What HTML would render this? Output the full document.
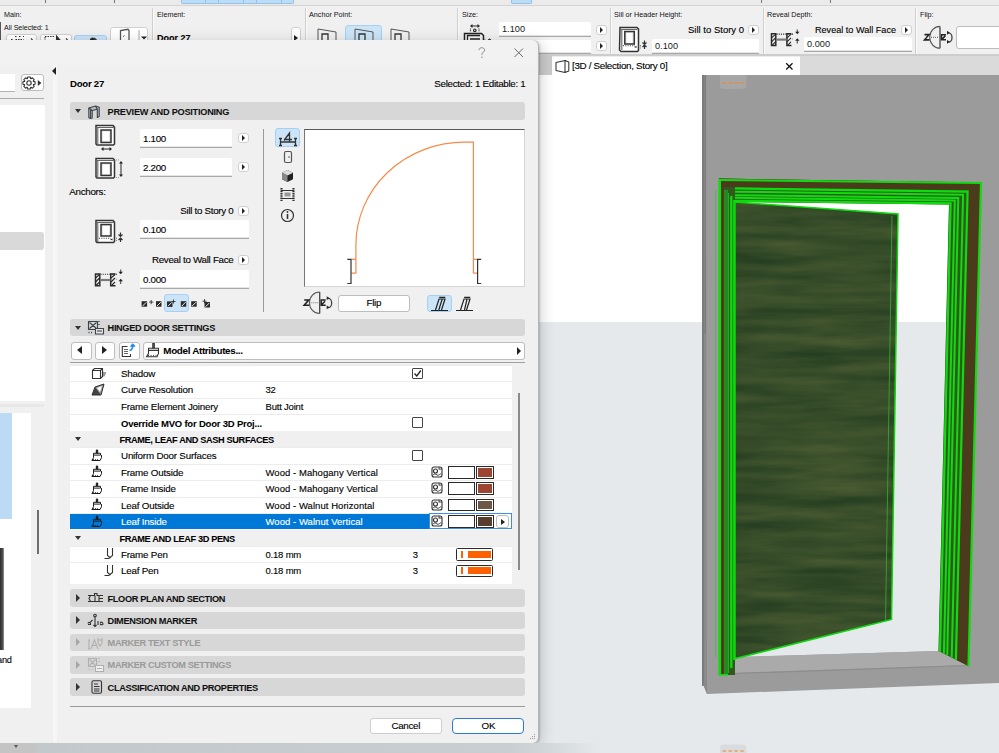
<!DOCTYPE html>
<html><head><meta charset="utf-8">
<style>
*{box-sizing:border-box;margin:0;padding:0}
html,body{width:999px;height:753px;overflow:hidden;background:#f0f0f0;font-family:"Liberation Sans",sans-serif;color:#1a1a1a}
.a{position:absolute}
.t{position:absolute;white-space:nowrap;font-size:9.2px;line-height:12px;color:#000;-webkit-text-stroke:0.12px currentColor}
.t[style*="bold"]{-webkit-text-stroke:0.05px currentColor}
.s{font-size:7.2px;line-height:9px;color:#111;-webkit-text-stroke:0}
.b{font-weight:bold}
.r{text-align:right}
.fld{position:absolute;background:#fff;border-bottom:1.5px solid #a9a9a9;box-shadow:inset 0 -1px 0 #e4e4e4;border-radius:2px 2px 0 0}
.fld span{position:absolute;left:3px;top:50%;margin-top:-6px;font-size:9.2px;line-height:12px;white-space:nowrap}
.abtn{position:absolute;width:11px;height:10px;background:#fff;border:1px solid #d0d0d0;border-radius:3px}
.abtn:after{content:"";position:absolute;left:3px;top:1px;border-left:3.5px solid #222;border-top:3px solid transparent;border-bottom:3px solid transparent}
.vsep{position:absolute;width:2px;background:#cfcfcf;border-right:1px solid #fafafa}
.hdr{position:absolute;left:69.5px;width:455.5px;height:17.5px;background:#d7d7d7;border-radius:3px}
.hdr .tri{position:absolute;left:5px;top:7px;border-top:4px solid #333;border-left:4px solid transparent;border-right:4px solid transparent}
.hdr .trr{position:absolute;left:7px;top:5px;border-left:4px solid #333;border-top:4px solid transparent;border-bottom:4px solid transparent}
.hdr .ht{position:absolute;left:38px;top:2px;font-size:8.7px;font-weight:bold;white-space:nowrap;line-height:13px;color:#111}
.hdr svg{position:absolute;left:18px;top:1px}
.dis .ht{color:#9a9a9a}.dis .trr{border-left-color:#aaa}
.row{position:absolute;left:69px;width:441px;height:16.5px;background:#fff;border-bottom:1px solid #ececec}
.row .n{position:absolute;left:51px;top:2px;font-size:9.3px;line-height:12px;white-space:nowrap}
.row .v{position:absolute;left:195px;top:2px;font-size:9.1px;line-height:12px;white-space:nowrap}
.row.sub{background:#f4f4f4}
.cb{position:absolute;left:344px;top:3px;width:11px;height:11px;border:1px solid #333;background:#fff}
.btn{position:absolute;background:#fff;border:1px solid #bdbdbd;border-radius:3px;text-align:center;font-size:9.2px;line-height:15px}
.hl{position:absolute;background:#cce4f7;border:1px solid #a6cff2;border-radius:3px}
</style></head><body>

<!-- ============ TOP TOOLBAR ============ -->
<div class="a" style="left:0;top:0;width:999px;height:6px;background:#ebebeb;border-bottom:1px solid #d4d4d4"></div>
<div class="a" style="left:45px;top:0;width:1px;height:3px;background:#777"></div>
<div class="a" style="left:114px;top:0;width:1px;height:3px;background:#777"></div>
<div class="a" style="left:181px;top:0;width:113px;height:4px;background:#bddcf5;border:1px solid #93c2ea;border-top:none;border-radius:0 0 2px 2px"></div>
<div class="a" style="left:205px;top:0;width:1px;height:4px;background:#93c2ea"></div>
<div class="a" style="left:218px;top:0;width:1px;height:4px;background:#93c2ea"></div>
<div class="a" style="left:243px;top:0;width:1px;height:4px;background:#93c2ea"></div>
<div class="a" style="left:256px;top:0;width:1px;height:4px;background:#93c2ea"></div>
<div class="a" style="left:281px;top:0;width:1px;height:4px;background:#93c2ea"></div>
<div class="a" style="left:511px;top:0;width:21px;height:4px;background:#bddcf5;border:1px solid #93c2ea;border-top:none;border-radius:0 0 2px 2px"></div>
<div class="a" style="left:761px;top:0;width:1px;height:3px;background:#777"></div>
<div class="a" style="left:830px;top:0;width:1px;height:3px;background:#777"></div>
<div class="a" style="left:0;top:22px;width:1px;height:20px;background:#555"></div>

<div class="vsep" style="left:152px;top:8px;height:46px"></div>
<div class="vsep" style="left:305px;top:8px;height:46px"></div>
<div class="vsep" style="left:457px;top:8px;height:46px"></div>
<div class="vsep" style="left:610px;top:8px;height:46px"></div>
<div class="vsep" style="left:763px;top:8px;height:46px"></div>
<div class="vsep" style="left:915px;top:8px;height:46px"></div>

<div class="t s" style="left:4px;top:10px">Main:</div>
<div class="t s" style="left:4px;top:23.5px;font-size:7.1px;letter-spacing:-0.05px">All Selected: 1</div>
<div class="btn" style="left:5.5px;top:34px;width:31.5px;height:12px;border-color:#d0d0d0"></div>
<div class="btn" style="left:40px;top:34px;width:32px;height:12px;border-color:#d0d0d0"></div>
<div class="hl" style="left:74px;top:34.5px;width:33px;height:12px"></div>
<div class="btn" style="left:110px;top:26.5px;width:38px;height:20px;border-color:#d0d0d0"></div>
<svg class="a" style="left:0;top:34px" width="150" height="6"><g fill="none" stroke="#333" stroke-width="1.1">
<path d="M11 5.5h2M15 2.5h2M19 2.5h2M23 2.5h1M15.5 5.5h8" stroke-dasharray="1.5 1"/><path d="M31 4.5l1.5 1.5" />
<path d="M45 2.5h10M45 3v3" stroke-dasharray="1.5 1"/><path d="M56.5 2v4l3.5 0z" fill="#222"/><path d="M66 4.5l1.5 1.5"/>
<path d="M90.5 6a2 2 0 0 1 4 0" fill="#222"/><path d="M94 4l2.5 2" stroke-width="1.3"/>
</g></svg>
<svg class="a" style="left:118px;top:28px" width="30" height="12"><path d="M2.5 12V2.5l7.5-1.2 1 1V12" fill="none" stroke="#555" stroke-width="1.3"/><path d="M5 8.5l1.5-.8" stroke="#555" stroke-width="1"/><line x1="21" y1="2" x2="21" y2="12" stroke="#aaa"/><path d="M23 8.5h6l-3 3z" fill="#222"/></svg>
<div class="t s" style="left:157px;top:10px">Element:</div>
<div class="t b" style="left:157px;top:32px;font-size:9px">Door 27</div>
<div class="btn" style="left:290.5px;top:26.5px;width:10px;height:16px;border-color:#d0d0d0"></div><div class="a" style="left:294px;top:34.5px;border-left:4px solid #222;border-top:3.5px solid transparent;border-bottom:3.5px solid transparent"></div>

<div class="t s" style="left:309px;top:10px">Anchor Point:</div>
<div class="hl" style="left:345px;top:25px;width:37px;height:17px"></div>
<svg class="a" style="left:315px;top:28px" width="100" height="13">
 <g fill="none" stroke="#555" stroke-width="1"><path d="M3 1 L21 4 V13 M3 1 V13"/><path d="M7 6h6v7h-6z" stroke="#333" stroke-width="1.3"/>
 <path d="M40 1 L58 4 V13 M40 1 V13"/><path d="M44 6h6v7h-6z" stroke="#333" stroke-width="1.3"/>
 <path d="M76 1 L94 4 V13 M76 1 V13"/><path d="M80 6h6v7h-6z" stroke="#333" stroke-width="1.3"/></g></svg>

<div class="t s" style="left:462px;top:10px">Size:</div>
<svg class="a" style="left:458px;top:18px" width="40" height="24"><g fill="none" stroke="#222">
<path d="M13 8h8" stroke-width="1.3" stroke="#555"/><path d="M12 8l2.5-2v4zM22 8l-2.5-2v4z" fill="#222" stroke="none"/>
<path d="M12.5 10.5v3M21 10.5v3" stroke-dasharray="1 .8" stroke-width="1.1"/><circle cx="16.8" cy="12.3" r="1.3" stroke-width="1.1"/>
<path d="M6.5 24V15.5h17l2 2V24" stroke-width="1.5"/><path d="M9.5 24v-6.5h12.5M12 21h10" stroke-width="1.3"/><path d="M26.5 22h2" stroke-dasharray="1 1"/><path d="M29.5 22.5l2-1.5 2 1.5z" fill="#222"/>
</g></svg>
<div class="fld" style="left:499px;top:22px;width:92px;height:15px"><span>1.100</span></div>
<div class="abtn" style="left:596px;top:25px"></div>
<div class="fld" style="left:499px;top:40px;width:92px;height:14px"></div>
<div class="abtn" style="left:596px;top:41px"></div>

<div class="t s" style="left:614px;top:10px">Sill or Header Height:</div>
<svg class="a" style="left:614px;top:22px" width="40" height="32"><g fill="none" stroke="#333">
<path d="M6 5.5h17l1.5 1.5v21.5l-1 1h-16.5l-1.5-1.5z" fill="#fff" stroke-width="1.5"/><path d="M6 7.5h17.5M7.8 7.5v20.5" stroke="#666" stroke-width="1.1"/>
<path d="M10.8 9.5h9.5v12.5h-9.5z" stroke-width="1.5" fill="#e0e0e0"/><path d="M12.5 11h6v10h-6z" fill="#fff" stroke="none"/>
<path d="M9 23.8h12" stroke-dasharray="1 1.3" stroke-width="1.1"/><path d="M20 25l2.5-1v2z" fill="#222" stroke="none"/>
<path d="M26.5 23v1.5M26.5 25.5v1" stroke="#888"/><path d="M30.5 18.5v3.5M28.5 20.5l2 2 2-2M30.5 27v-3.5M28.5 25l2-2 2 2" stroke-width="1.2"/>
</g></svg>
<div class="t r" style="left:643px;top:24px;width:101px;font-size:9.5px">Sill to Story 0</div>
<div class="abtn" style="left:748px;top:25px"></div>
<div class="fld" style="left:652px;top:39px;width:107px;height:15px"><span>0.100</span></div>

<div class="t s" style="left:767px;top:10px">Reveal Depth:</div>
<svg class="a" style="left:764px;top:22px" width="40" height="28"><g fill="none" stroke="#2a2a2a"><path d="M7.5 11.8h4.3v11.8h-4.3z" stroke-width="1.5"/><path d="M27.5 11.8h-4.6v11.8h4.6" stroke-width="1.5"/><path d="M7.5 15.8l4-3.5M7.5 19.8l4-4M8 23.3l3.5-3.5M23 15.8l4-3.5M23 19.8l4-4M23.5 23.3l3.5-3.5" stroke-width="1.1"/><path d="M12.5 12.1h17" stroke-dasharray="1.1 1.1" stroke-width="1.1"/><path d="M12 17.6h10.5" stroke="#7a7a7a" stroke-width="2.2"/><path d="M28 17h2" stroke="#999" stroke-dasharray="1 1"/><path d="M33.3 7.5v3" stroke="#555" stroke-width="1.2"/><path d="M31.1 9.8h4.4l-2.2 2.4z" fill="#222" stroke="none"/><path d="M33.3 18.5v3" stroke="#555" stroke-width="1.2"/><path d="M31.1 18.7h4.4l-2.2-2.4z" fill="#222" stroke="none"/></g></svg>
<div class="t r" style="left:796px;top:24px;width:100px;font-size:9.1px">Reveal to Wall Face</div>
<div class="abtn" style="left:901px;top:25px"></div>
<div class="fld" style="left:804px;top:37px;width:108px;height:15px"><span>0.000</span></div>

<div class="t s" style="left:920px;top:10px">Flip:</div>
<svg class="a" style="left:918px;top:20px" width="40" height="34"><g fill="none" stroke="#333"><path d="M22 6.4A10.3 10.95 0 0 0 22 28.3" stroke="#555" stroke-width="1.1"/><path d="M22 6.4V28.3" stroke="#444" stroke-width="1.3"/><path d="M13 17.35H23" stroke="#777" stroke-dasharray="1 1" stroke-width="1.1"/><path d="M6.5 14.650000000000002h4.5l-4.5 5.2h5" stroke="#222" stroke-width="1.6"/><path d="M28 14.650000000000002h-4.5v5.2h4.5M23.8 19.35l3.5-3.5" stroke="#222" stroke-width="1.5"/><path d="M30.5 12.850000000000001a3.5 4.7 0 0 1 0 9.4" stroke="#444" stroke-width="1.3"/><path d="M29 10.850000000000001l2.8 2-2.8 1.8zM29 23.85l2.8-2-2.8-1.8z" fill="#222" stroke="none"/></g></svg>
<div class="btn" style="left:956px;top:26px;width:50px;height:23px"></div>

<div class="a" style="left:0;top:54px;width:999px;height:2px;background:#cdcdcd"></div>

<!-- ============ 3D VIEW ============ -->
<svg class="a" style="left:0;top:0" width="999" height="753">
 <defs>
  <linearGradient id="sky" gradientUnits="userSpaceOnUse" x1="0" y1="75" x2="0" y2="753">
   <stop offset="0" stop-color="#ffffff"/><stop offset="0.3643" stop-color="#ffffff"/><stop offset="0.3643" stop-color="#e5e9eb"/><stop offset="1" stop-color="#e5e9eb"/>
  </linearGradient>
  <filter id="grain" x="0" y="0" width="100%" height="100%" color-interpolation-filters="sRGB">
   <feTurbulence type="fractalNoise" baseFrequency="0.009 0.075" numOctaves="4" seed="11"/>
   <feColorMatrix values="0.19 0 0 0 0.118  0.15 0 0 0 0.222  0.09 0 0 0 0.115  0 0 0 0 1"/>
  </filter>
  <clipPath id="leafclip"><polygon points="735,202 898,214 891.5,619.5 735,658.6"/></clipPath>
 </defs>
 <!-- tab strip -->
 <rect x="538" y="56" width="461" height="19" fill="#dadada"/>
 <rect x="538" y="56" width="14" height="19" fill="#cbcbcb"/>
 <rect x="552" y="56.5" width="248" height="18.5" fill="#ffffff"/>
 <rect x="538" y="75" width="461" height="678" fill="url(#sky)"/>
 <!-- wall -->
 <polygon points="703,75 999,75 999,683 707,694 703,684" fill="#9b9b9b"/>
 <polygon points="703,75 706,75 707,694 703,684" fill="#8a8a8a"/>
 <line x1="702.8" y1="75" x2="702.8" y2="686" stroke="#6e6e6e" stroke-width="1.4"/><line x1="705.3" y1="75" x2="705.3" y2="334" stroke="#7a7a7a" stroke-width="1.2"/>
 <!-- opening -->
 <polygon points="735,202 949,204.5 938.5,651 735,657" fill="url(#sky)"/>
 <!-- sill -->
 <polygon points="735,657 938.5,651 968,665 735,673" fill="#aaaaaa"/>
 <line x1="719" y1="674" x2="968" y2="665.5" stroke="#8c8c8c" stroke-width="1.2"/>
 <!-- frame -->
 <polygon points="719,178.5 981,182.5 968.5,666 938.5,651 949,204.5 735,202 735,675 719,675" fill="#2f5a1c"/>
 <polygon points="968.2,191.3 981.0,182.5 968.5,666.0 956.5,660.0" fill="#4c3a1c"/>
 <polygon points="719,178.5 981,182.5 976,190 719,187" fill="#4c3a1c"/>
 <rect x="721.5" y="186" width="2.2" height="489" fill="#5a3418"/>
 <rect x="724" y="190" width="4" height="485" fill="#238a20"/>
 <g fill="none" stroke="#0edc0e">
  <polyline points="719.6,180 981,183 968.5,666.5" stroke-width="2.2"/>
  <line x1="719.7" y1="179" x2="719.7" y2="675" stroke-width="2.6"/>
  <line x1="719" y1="674.8" x2="728" y2="674.8" stroke-width="1.6"/>
  <line x1="731.3" y1="196" x2="731.3" y2="668" stroke-width="2.3"/>
  <line x1="734.2" y1="200" x2="734.2" y2="660" stroke-width="2.1"/>
  <line x1="728.5" y1="193" x2="728.5" y2="673" stroke-width="1" stroke="#1cb01c"/>
  <polyline points="735.0,200.8 950.6,203.4 940.0,651.8" stroke-width="2.2"/>
  <polyline points="735.0,197.8 954.8,200.5 943.9,653.7" stroke-width="2.0"/>
  <polyline points="735.0,195.2 958.3,198.1 947.2,655.4" stroke-width="2.0"/>
  <polyline points="735.0,191.7 963.1,194.8 951.7,657.6" stroke-width="2.0"/>
  <polyline points="735.0,188.4 967.6,191.7 955.9,659.7" stroke-width="2.2"/>
 </g>
 <line x1="715.8" y1="190" x2="715.8" y2="657" stroke="#4cb44c" stroke-width="1.1" opacity=".8"/>
 <!-- leaf -->
 <g clip-path="url(#leafclip)"><rect x="735" y="200" width="165" height="460" fill="#384c2c"/><rect x="735" y="200" width="165" height="460" filter="url(#grain)"/></g>
 <polygon points="735,202 898,214 891.5,619.5 735,658.6" fill="none" stroke="#0ad80a" stroke-width="1.5"/>
 <line x1="892" y1="216" x2="885.5" y2="621" stroke="#2fb42f" stroke-width=".8"/>
 <!-- nav widgets -->
 <path d="M720 75H746.5V85.5Q746.5 89 743 89H723.5Q720 89 720 85.5Z" fill="#a6a6a6"/>
 <line x1="722.5" y1="82.7" x2="745" y2="82.7" stroke="#9ab0c8" stroke-width="3.2" stroke-dasharray="3.6 2.3" opacity=".5"/>
 <line x1="722.5" y1="82.7" x2="745" y2="82.7" stroke="#f0882c" stroke-width="1.6" stroke-dasharray="3.6 2.3"/>
 <rect x="720" y="744.5" width="26.5" height="14" rx="3.5" fill="#d8dcde"/>
 <line x1="722.5" y1="751" x2="745" y2="751" stroke="#f0a060" stroke-width="1.6" stroke-dasharray="3.6 2.3"/>
</svg>
<svg class="a" style="left:555px;top:58px" width="16" height="16"><path d="M1 4.5L10 2.5V14.5L1 12.5ZM10 2.5L13.8 4V13L10 14.5" fill="none" stroke="#333" stroke-width="1.05" stroke-linejoin="round"/></svg>
<div class="t" style="left:572px;top:60.2px;font-size:9.8px;letter-spacing:-0.3px">[3D / Selection, Story 0]</div>
<svg class="a" style="left:785px;top:62px" width="9" height="9"><path d="M1.2 1.2L7.5 7.5M7.5 1.2L1.2 7.5" stroke="#111" stroke-width="1.25"/></svg>

<!-- ============ DIALOG ============ -->
<div class="a" style="left:-6px;top:40px;width:545px;height:702.5px;background:#f0f0f0;border-radius:0 6px 6px 0;box-shadow:1px 1px 2px rgba(0,0,0,.18),3px 2px 14px rgba(0,0,0,.16);border-right:1px solid #b4b4b4"></div>
<div class="a" style="left:0;top:74px;width:15px;height:17.5px;background:#fff;border-bottom:1.5px solid #b4b4b4"></div>
<div class="btn" style="left:21px;top:74px;width:22.5px;height:17px"></div>
<svg class="a" style="left:21.5px;top:74.5px" width="22" height="16"><g fill="none" stroke="#333" stroke-width="1.1" stroke-linejoin="round"><path d="M11.42 6.41 L13.07 6.72 L13.07 9.28 L11.42 9.59 L11.25 10.00 L12.19 11.39 L10.39 13.19 L9.00 12.25 L8.59 12.42 L8.28 14.07 L5.72 14.07 L5.41 12.42 L5.00 12.25 L3.61 13.19 L1.81 11.39 L2.75 10.00 L2.58 9.59 L0.93 9.28 L0.93 6.72 L2.58 6.41 L2.75 6.00 L1.81 4.61 L3.61 2.81 L5.00 3.75 L5.41 3.58 L5.72 1.93 L8.28 1.93 L8.59 3.58 L9.00 3.75 L10.39 2.81 L12.19 4.61 L11.25 6.00Z"/><circle cx="7.0" cy="8.0" r="2.2"/></g><path d="M15.8 5l3.6 3-3.6 3z" fill="#333"/></svg>
<div class="a" style="left:0;top:97.5px;width:44px;height:1px;background:#a9a9a9"></div>
<div class="a" style="left:0;top:104.5px;width:44.5px;height:296px;background:#fff"></div>
<div class="a" style="left:0;top:232px;width:44px;height:18px;background:#d9d9d9;border-radius:0 3px 3px 0"></div>
<div class="a" style="left:0;top:404px;width:44px;height:3px;background:#e8e8e8"></div>
<div class="a" style="left:0;top:413px;width:31px;height:294.5px;background:#fff"></div>
<div class="a" style="left:0;top:413px;width:11.5px;height:106px;background:#bcdaf3"></div>
<div class="a" style="left:0;top:548px;width:4px;height:102px;background:linear-gradient(90deg,#2e2e2e,#4a4a4a 60%,#9a9a9a)"></div>
<div class="t" style="top:653.81px;font-size:9.2px;letter-spacing:-0.2px;left:-3px;">and</div>
<div class="a" style="left:37px;top:510px;width:1.5px;height:44px;background:#6e6e6e"></div>
<div class="a" style="left:0;top:40px;width:536px;height:25px;background:#f2f2f2;border-top-right-radius:6px"></div>
<div class="a" style="left:52.5px;top:65px;width:4px;height:677px;background:#f6f6f6"></div>
<div class="a" style="left:51.5px;top:67px;border-right:4px solid #222;border-top:4px solid transparent;border-bottom:4px solid transparent"></div>
<svg class="a" style="left:476px;top:46.5px" width="50" height="14"><path d="M3 3.2c0-1.6 1.3-2.5 2.8-2.5s2.8.9 2.8 2.4c0 1.3-.9 1.8-1.7 2.4-.7.5-1 .9-1 1.8v.8" fill="none" stroke="#8a8a8a" stroke-width="1"/><circle cx="5.9" cy="10.3" r=".7" fill="#8a8a8a"/><path d="M38.5 1.5l8.5 8.5M47 1.5l-8.5 8.5" stroke="#6a6a6a" stroke-width="1"/></svg>
<div class="t" style="top:77.97px;font-size:9.6px;letter-spacing:-0.25px;font-weight:bold;left:70px;">Door 27</div>
<div class="t" style="top:77.90px;font-size:9.8px;letter-spacing:-0.3px;left:225.5px;width:300px;text-align:right;">Selected: 1 Editable: 1</div>
<div class="hdr" style="top:102.2px">
<div class="a" style="left:5px;top:7.3px;border-top:4px solid #333;border-left:3.5px solid transparent;border-right:3.5px solid transparent"></div>
<svg class="a" style="left:18.5px;top:2.5px" width="14" height="14"><g stroke="#3c4448" stroke-width="1.1" stroke-linejoin="round"><path d="M0.8 3L7.5 1L11.2 2.2V11.5L9.3 12.5V4.3L4.2 5.5V13L2.3 13.5L0.8 12.5Z" fill="#b8bcbe"/><path d="M0.8 3L4.2 5.5M7.5 1L9.3 4.3M2.6 4.2V13.3" fill="none"/></g></svg>
</div>
<div class="t" style="top:105.61px;font-size:9.2px;letter-spacing:-0.25px;font-weight:bold;color:#111;left:107.6px;">PREVIEW AND POSITIONING</div>
<svg class="a" style="left:94px;top:124px" width="30" height="56"><g fill="none" stroke="#333"><path d="M2 1.5h17l1.5 1.5v17.0l-1 1h-16.5l-1-1z" fill="#fff" stroke-width="1.5"/><path d="M2 3.5h18.5M3.8 3.5v17.5" stroke="#666" stroke-width="1.1"/><path d="M7 6.0h10v12.5h-10z" stroke-width="1.5" fill="#dcdcdc"/><path d="M8.7 7.5h6.6v9.5h-6.6z" fill="#fff" stroke="none"/><path d="M8.5 25h8" stroke-width="1.3" stroke="#555"/><path d="M7 25l2.5-2v4zM18 25l-2.5-2v4z" fill="#222" stroke="none"/><path d="M2 34.5h17l1.5 1.5v17.0l-1 1h-16.5l-1-1z" fill="#fff" stroke-width="1.5"/><path d="M2 36.5h18.5M3.8 36.5v17.5" stroke="#666" stroke-width="1.1"/><path d="M7 39.0h10v12.5h-10z" stroke-width="1.5" fill="#dcdcdc"/><path d="M8.7 40.5h6.6v9.5h-6.6z" fill="#fff" stroke="none"/><path d="M27 38.5v13" stroke-width="1.3" stroke="#555"/><path d="M27 37l-2 2.5h4zM27 53l-2-2.5h4z" fill="#222" stroke="none"/><path d="M22 36h3M22 53.5h3" stroke="#999" stroke-dasharray="1 1"/></g></svg>
<div class="fld" style="left:140px;top:129px;width:92px;height:19px"></div>
<div class="t" style="top:132.50px;font-size:9.8px;letter-spacing:-0.3px;left:143px;">1.100</div>
<div class="abtn" style="left:238px;top:133px"></div>
<div class="fld" style="left:140px;top:158px;width:92px;height:19px"></div>
<div class="t" style="top:161.50px;font-size:9.8px;letter-spacing:-0.3px;left:143px;">2.200</div>
<div class="abtn" style="left:238px;top:162px"></div>
<div class="t" style="top:185.90px;font-size:9.8px;letter-spacing:-0.3px;left:69.3px;">Anchors:</div>
<div class="t" style="top:204.90px;font-size:9.8px;letter-spacing:-0.3px;left:-66.5px;width:300px;text-align:right;">Sill to Story 0</div>
<div class="abtn" style="left:238px;top:205.5px"></div>
<svg class="a" style="left:94px;top:219px" width="32" height="26"><g fill="none" stroke="#333"><path d="M2 1.5h17l1.5 1.5v19.5l-1 1h-16.5l-1-1z" fill="#fff" stroke-width="1.5"/><path d="M2 3.5h18.5M3.8 3.5v19.5" stroke="#666" stroke-width="1.1"/><path d="M7 5.5h10v11.5h-10z" stroke-width="1.5" fill="#dcdcdc"/><path d="M8.7 7h6.6v9h-6.6z" fill="#fff" stroke="none"/><path d="M5 19.3h12" stroke-dasharray="1 1.3" stroke-width="1.1"/><path d="M16 20.5l2.5-1v2z" fill="#222" stroke="none"/><path d="M22.5 18.5v1.5M22.5 21v1" stroke="#888"/><path d="M26.5 13.5v3.5M24.5 15.5l2 2 2-2M26.5 23v-3.5M24.5 21l2-2 2 2" stroke-width="1.2"/></g></svg>
<div class="fld" style="left:140px;top:220px;width:109px;height:18.5px"></div>
<div class="t" style="top:223.50px;font-size:9.8px;letter-spacing:-0.3px;left:143px;">0.100</div>
<div class="t" style="top:254.30px;font-size:9.8px;letter-spacing:-0.3px;left:-66.5px;width:300px;text-align:right;">Reveal to Wall Face</div>
<div class="abtn" style="left:238px;top:254.5px"></div>
<svg class="a" style="left:90px;top:264px" width="40" height="28"><g fill="none" stroke="#2a2a2a"><path d="M5.5 10h4.3v11.8h-4.3z" stroke-width="1.5"/><path d="M25.5 10h-4.8v11.8h4.8" stroke-width="1.5"/><path d="M5.5 14l4-3.5M5.5 18l4-4M6 21.5l3.5-3.5M21 14l4-3.5M21 18l4-4M21.5 21.5l3.5-3.5" stroke-width="1.1"/><path d="M10.5 10.3h17" stroke-dasharray="1.1 1.1" stroke-width="1.1"/><path d="M10 16h10.5" stroke="#7a7a7a" stroke-width="2.2"/><path d="M26 15.3h2" stroke="#999" stroke-dasharray="1 1"/><path d="M30.7 5.5v3" stroke="#555" stroke-width="1.2"/><path d="M28.5 7.8h4.4l-2.2 2.4z" fill="#222" stroke="none"/><path d="M30.7 17v3" stroke="#555" stroke-width="1.2"/><path d="M28.5 17.2h4.4l-2.2-2.4z" fill="#222" stroke="none"/></g></svg>
<div class="fld" style="left:140px;top:270px;width:109px;height:18.5px"></div>
<div class="t" style="top:273.50px;font-size:9.8px;letter-spacing:-0.3px;left:143px;">0.000</div>
<div class="hl" style="left:164px;top:294.4px;width:24.8px;height:18px"></div>
<svg class="a" style="left:136px;top:290px" width="80" height="20"><rect x="5.6" y="11.2" width="5.5" height="5.5" fill="#2a2a2a"/><path d="M6.6 16.0L10.399999999999999 12.2" stroke="#e8e8e8" stroke-width="1"/><path d="M15.2 10v4.2M13.1 12.1h4.2" stroke="#333" stroke-width="0.9"/><rect x="20" y="11.2" width="5.5" height="5.5" fill="#2a2a2a"/><path d="M21 16.0L24.8 12.2" stroke="#e8e8e8" stroke-width="1"/><rect x="31" y="11.4" width="5.5" height="5.5" fill="#2a2a2a"/><path d="M32 16.2L35.8 12.4" stroke="#e8e8e8" stroke-width="1"/><path d="M37.5 9.5v4M35.5 11.5h4" stroke="#333" stroke-width="0.9"/><rect x="44.8" y="11.2" width="5.5" height="5.5" fill="#2a2a2a"/><path d="M45.8 16.0L49.599999999999994 12.2" stroke="#e8e8e8" stroke-width="1"/><rect x="55.2" y="11.2" width="5.5" height="5.5" fill="#2a2a2a"/><path d="M56.2 16.0L60.0 12.2" stroke="#e8e8e8" stroke-width="1"/><rect x="68.5" y="12" width="5.5" height="5.5" fill="#2a2a2a"/><path d="M69.5 16.8L73.3 13" stroke="#e8e8e8" stroke-width="1"/><path d="M68.5 9.2v4M66.5 11.2h4" stroke="#333" stroke-width="0.9"/></svg>
<div class="a" style="left:263px;top:129px;width:1.2px;height:183px;background:#9a9a9a"></div>
<div class="hl" style="left:275px;top:128px;width:24.5px;height:18.5px"></div>
<svg class="a" style="left:276px;top:129px" width="24" height="96"><g fill="none" stroke="#333" stroke-width="1.2"><path d="M4 13h16M4.5 9.5v7M3 9.5h3M3 16.5h3M19.5 9.5v7M18 9.5h3M18 16.5h3M8 11.5l5.5-7.5v9M8 10.5h8" stroke-width="1.3"/><rect x="8.5" y="22.5" width="7" height="11" rx="1.5" stroke="#555"/><path d="M13 27v2" stroke="#777"/><path d="M11.5 41l5.5 2.7v6.6l-5.5 2.7-5.5-2.7v-6.6z" fill="#222" stroke="none"/><path d="M11.5 41l5.5 2.7-5.5 2.7-5.5-2.7z" fill="#ddd" stroke="none"/><path d="M6 43.7l5.5 2.7v6.6l-5.5-2.7z" fill="#888" stroke="none"/><path d="M5.5 59v13M17.5 59v13" stroke-width="2.2" stroke-dasharray="1.6 0.8"/><path d="M5 61.5h13M5 69.5h13" stroke-width="1.1"/><path d="M8.5 63.5h6v4h-6z" fill="#999" stroke="none"/><circle cx="11.5" cy="86.5" r="6"/><path d="M11.5 85v5" stroke-width="1.6"/><circle cx="11.5" cy="83" r=".9" fill="#333" stroke="none"/></g></svg>
<div class="a" style="left:304px;top:129px;width:221px;height:158px;background:#fff;border-top:1.5px solid #5a5a5a;border-left:1.5px solid #777;border-right:1px solid #d4d4d4;border-bottom:1px solid #d4d4d4"></div>
<svg class="a" style="left:304px;top:129px" width="221" height="158"><g fill="none" stroke="#f58a4a" stroke-width="1.2"><path d="M51.9 144.2 V116 A108.7 102.9 0 0 1 160.6 13.1 H169.4 V144.2"/><path d="M47.3 130.4h4.6M47.3 144.2h4.6M169.4 130.4h4.2M169.4 144.2h4.2"/></g><g fill="none" stroke="#333" stroke-width="1.2"><path d="M43.3 130.4H47V154.5H43.3M177.2 130.4H173.6V154.5H177.2"/></g></svg>
<svg class="a" style="left:300px;top:288px" width="40" height="34"><g fill="none" stroke="#333"><path d="M19.7 4A10.3 10.75 0 0 0 19.7 25.5" stroke="#555" stroke-width="1.1"/><path d="M19.7 4V25.5" stroke="#444" stroke-width="1.3"/><path d="M10.7 14.75H20.7" stroke="#777" stroke-dasharray="1 1" stroke-width="1.1"/><path d="M4.199999999999999 12.05h4.5l-4.5 5.2h5" stroke="#222" stroke-width="1.6"/><path d="M25.7 12.05h-4.5v5.2h4.5M21.5 16.75l3.5-3.5" stroke="#222" stroke-width="1.5"/><path d="M28.2 10.25a3.5 4.7 0 0 1 0 9.4" stroke="#444" stroke-width="1.3"/><path d="M26.7 8.25l2.8 2-2.8 1.8zM26.7 21.25l2.8-2-2.8-1.8z" fill="#222" stroke="none"/></g></svg>
<div class="btn" style="left:337.5px;top:294.5px;width:72.5px;height:17.5px"></div>
<div class="t" style="top:297.10px;font-size:9.8px;letter-spacing:-0.3px;left:0px;left:337.5px;width:72.5px;text-align:center;">Flip</div>
<div class="hl" style="left:427px;top:295px;width:25px;height:17px"></div>
<svg class="a" style="left:420px;top:288px" width="60" height="28"><g fill="none" stroke="#222" stroke-width="1.2"><path d="M11 22.5h17M15.5 22L19 11h6l-3.5 11M18.8 22l3.4-11M19.2 9.3h6"/><path d="M36 22.5h17M40.5 22L44 11h6l-3.5 11M44.5 22l2.5-11M44.2 9.3h6"/></g></svg>
<div class="hdr" style="top:318.7px">
<div class="a" style="left:5px;top:7.3px;border-top:4px solid #333;border-left:3.5px solid transparent;border-right:3.5px solid transparent"></div>
<svg class="a" style="left:17px;top:1.5px" width="18" height="15"><g fill="none" stroke="#3c4448" stroke-width="1.1"><path d="M1.5 1.5h9v8h-9zM2.5 2.5l7 6M9.5 2.5l-7 6"/><path d="M1.5 12.5h1M4 12.5h1M12 1v1M12 4v1" stroke-width="1.3"/><path d="M8.5 8.5h8v5.5h-8z" fill="#e8e8e8"/><path d="M10 11h5"/></g></svg>
</div>
<div class="t" style="top:322.11px;font-size:9.2px;letter-spacing:-0.35px;font-weight:bold;color:#111;left:107.6px;">HINGED DOOR SETTINGS</div>
<div class="btn" style="left:70.5px;top:341.5px;width:21px;height:18px"></div>
<div class="a" style="left:76.5px;top:346px;border-right:5.5px solid #222;border-top:4.5px solid transparent;border-bottom:4.5px solid transparent"></div>
<div class="btn" style="left:94.5px;top:341.5px;width:20.5px;height:18px"></div>
<div class="a" style="left:102px;top:346px;border-left:5.5px solid #222;border-top:4.5px solid transparent;border-bottom:4.5px solid transparent"></div>
<div class="btn" style="left:118.5px;top:341.5px;width:21px;height:18px"></div>
<svg class="a" style="left:110px;top:336px" width="60" height="28"><g fill="none" stroke="#333" stroke-width="1.1"><path d="M17.5 10.5h-5.2v10h8.2v-2.5"/><path d="M14 13.5h4M14 15.5h4M14 17.5h4" stroke="#666"/><path d="M19.5 14.5c2.3-.3 3.2-2.2 3.2-5" stroke="#1e8af5" stroke-width="1.6"/><path d="M20.5 10.3l2.2-2.6 2.2 2.6z" fill="#1e8af5" stroke="#1e8af5" stroke-width="1"/></g></svg>
<div class="btn" style="left:142.5px;top:341.5px;width:382.5px;height:18px"></div>
<svg class="a" style="left:110px;top:336px" width="60" height="28"><g fill="none" stroke="#333" stroke-width="1.1"><path d="M42.8 7.5h1.5v4.5h-1.5z" fill="#777"/><path d="M38.5 12.2h10v2.2h-10z"/><path d="M38.5 14.5v3l-2 3.3h10.5l1.5-3.3v-3"/><path d="M38 20.2l1-1.3M40.5 20.2l1-1.3M43 20.2l1-1.3M45.5 20.2l1-1.3" stroke-width=".9"/></g></svg>
<div class="t" style="top:344.70px;font-size:9.8px;letter-spacing:-0.3px;font-weight:bold;left:163.3px;">Model Attributes...</div>
<div class="a" style="left:517px;top:346.5px;border-left:4px solid #222;border-top:4px solid transparent;border-bottom:4px solid transparent"></div>
<div class="a" style="left:69.5px;top:362px;width:455.5px;height:1px;background:#a0a0a0"></div>
<div class="a" style="left:69.5px;top:365px;width:442px;height:219px;background:#fff"></div>
<div class="a" style="left:518.3px;top:393px;width:1.6px;height:177px;background:#8a8a8a"></div>
<div class="a" style="left:69.5px;top:365.00px;width:442px;height:16.45px;background:#fff;border-top:1px solid #ececec"></div>
<svg class="a" style="left:91px;top:366.50px" width="17" height="12"><g stroke="#333" stroke-width="1.1"><path d="M11.5 4.5l4 1-2 4h-3z" fill="#999" stroke="none"/><path d="M1.5 3.5l2-2h8v8l-2 2h-8z" fill="#fff"/><path d="M1.5 3.5h8v8M9.5 3.5l2-2" fill="none"/></g></svg>
<div class="t" style="top:367.90px;font-size:9.8px;letter-spacing:-0.2px;left:121px;">Shadow</div>
<div class="a" style="left:411.8px;top:368.00px;width:11px;height:11px;border:1px solid #444;border-radius:1px;background:#fff"></div>
<svg class="a" style="left:412px;top:368.00px" width="11" height="11"><path d="M2.5 5.5l2.3 2.5 4-5.5" fill="none" stroke="#222" stroke-width="1.3"/></svg>
<div class="a" style="left:69.5px;top:381.45px;width:442px;height:16.45px;background:#fff;border-top:1px solid #ececec"></div>
<svg class="a" style="left:91px;top:382.95px" width="14" height="13"><path d="M1 12l3-8 9-3-3 11z" fill="#444"/><path d="M4 4l9-3-3 11z" fill="#999"/><path d="M6 5l5-2-2 6z" fill="#fff"/><path d="M1 12l3-8 9-3-3 11z" fill="none" stroke="#333"/></svg>
<div class="t" style="top:384.35px;font-size:9.8px;letter-spacing:-0.2px;left:121px;">Curve Resolution</div>
<div class="t" style="top:384.46px;font-size:9.5px;letter-spacing:-0.2px;left:265.5px;">32</div>
<div class="a" style="left:69.5px;top:397.90px;width:442px;height:16.45px;background:#fff;border-top:1px solid #ececec"></div>
<div class="t" style="top:400.80px;font-size:9.8px;letter-spacing:-0.2px;left:121px;">Frame Element Joinery</div>
<div class="t" style="top:400.91px;font-size:9.5px;letter-spacing:-0.2px;left:265.5px;">Butt Joint</div>
<div class="a" style="left:69.5px;top:414.35px;width:442px;height:16.45px;background:#fff;border-top:1px solid #ececec"></div>
<div class="t" style="top:417.65px;font-size:9.5px;letter-spacing:-0.2px;font-weight:bold;left:121px;">Override MVO for Door 3D Proj...</div>
<div class="a" style="left:411.8px;top:417.35px;width:11px;height:11px;border:1px solid #444;border-radius:1px;background:#fff"></div>
<div class="a" style="left:69.5px;top:430.80px;width:442px;height:16.45px;background:#f0f0f0"></div>
<div class="a" style="left:75px;top:437.10px;border-top:4px solid #333;border-left:3.5px solid transparent;border-right:3.5px solid transparent"></div>
<div class="t" style="top:433.81px;font-size:9.2px;letter-spacing:-0.35px;font-weight:bold;left:119.4px;">FRAME, LEAF AND SASH SURFACES</div>
<div class="a" style="left:69.5px;top:447.25px;width:442px;height:16.45px;background:#fff;border-top:1px solid #ececec"></div>
<svg class="a" style="left:91px;top:448.75px" width="12" height="13"><g fill="none" stroke="#1a1a1a" stroke-width="1"><path d="M5.3 1h1.4v3h-1.4z" fill="#1a1a1a"/><path d="M2.5 4.3h7v1.8h-7z"/><path d="M2.5 6.1v2.6l-1.6 2.8h8.2l1.4-2.8v-2.6"/><path d="M2 11l.8-1M4 11l.8-1M6 11l.8-1" stroke-width=".8"/></g></svg>
<div class="t" style="top:450.15px;font-size:9.8px;letter-spacing:-0.2px;left:121px;">Uniform Door Surfaces</div>
<div class="a" style="left:411.8px;top:450.25px;width:11px;height:11px;border:1px solid #444;border-radius:1px;background:#fff"></div>
<div class="a" style="left:69.5px;top:463.70px;width:442px;height:16.45px;background:#fff;border-top:1px solid #ececec"></div>
<svg class="a" style="left:91px;top:465.20px" width="12" height="13"><g fill="none" stroke="#1a1a1a" stroke-width="1"><path d="M5.3 1h1.4v3h-1.4z" fill="#1a1a1a"/><path d="M2.5 4.3h7v1.8h-7z"/><path d="M2.5 6.1v2.6l-1.6 2.8h8.2l1.4-2.8v-2.6"/><path d="M2 11l.8-1M4 11l.8-1M6 11l.8-1" stroke-width=".8"/></g></svg>
<div class="t" style="top:466.60px;font-size:9.8px;letter-spacing:-0.2px;left:121px;">Frame Outside</div>
<div class="t" style="top:466.71px;font-size:9.5px;letter-spacing:0.05px;left:265.5px;">Wood - Mahogany Vertical</div>
<svg class="a" style="left:430.5px;top:465.70px" width="12" height="12"><g fill="none" stroke="#333" stroke-width="1.1"><rect x="1" y="1" width="10" height="10" rx="2"/><circle cx="4.5" cy="5" r="2"/><path d="M1.5 9.5c2-2 3-2 4.5-.5s3-2 4.5-1M8 1v2.5M8 3h3" stroke-width=".9"/></g></svg>
<div class="a" style="left:448px;top:466.00px;width:26.5px;height:12.5px;background:#fff;border:1px solid #2a2a2a;border-bottom-width:1.5px"></div>
<div class="a" style="left:476px;top:466.00px;width:18px;height:12.5px;background:#9c4532;border:1px solid #2a2a2a;box-shadow:inset 0 0 0 1px #fff"></div>
<div class="a" style="left:69.5px;top:480.15px;width:442px;height:16.45px;background:#fff;border-top:1px solid #ececec"></div>
<svg class="a" style="left:91px;top:481.65px" width="12" height="13"><g fill="none" stroke="#1a1a1a" stroke-width="1"><path d="M5.3 1h1.4v3h-1.4z" fill="#1a1a1a"/><path d="M2.5 4.3h7v1.8h-7z"/><path d="M2.5 6.1v2.6l-1.6 2.8h8.2l1.4-2.8v-2.6"/><path d="M2 11l.8-1M4 11l.8-1M6 11l.8-1" stroke-width=".8"/></g></svg>
<div class="t" style="top:483.05px;font-size:9.8px;letter-spacing:-0.2px;left:121px;">Frame Inside</div>
<div class="t" style="top:483.16px;font-size:9.5px;letter-spacing:0.05px;left:265.5px;">Wood - Mahogany Vertical</div>
<svg class="a" style="left:430.5px;top:482.15px" width="12" height="12"><g fill="none" stroke="#333" stroke-width="1.1"><rect x="1" y="1" width="10" height="10" rx="2"/><circle cx="4.5" cy="5" r="2"/><path d="M1.5 9.5c2-2 3-2 4.5-.5s3-2 4.5-1M8 1v2.5M8 3h3" stroke-width=".9"/></g></svg>
<div class="a" style="left:448px;top:482.45px;width:26.5px;height:12.5px;background:#fff;border:1px solid #2a2a2a;border-bottom-width:1.5px"></div>
<div class="a" style="left:476px;top:482.45px;width:18px;height:12.5px;background:#9c4532;border:1px solid #2a2a2a;box-shadow:inset 0 0 0 1px #fff"></div>
<div class="a" style="left:69.5px;top:496.60px;width:442px;height:16.45px;background:#fff;border-top:1px solid #ececec"></div>
<svg class="a" style="left:91px;top:498.10px" width="12" height="13"><g fill="none" stroke="#1a1a1a" stroke-width="1"><path d="M5.3 1h1.4v3h-1.4z" fill="#1a1a1a"/><path d="M2.5 4.3h7v1.8h-7z"/><path d="M2.5 6.1v2.6l-1.6 2.8h8.2l1.4-2.8v-2.6"/><path d="M2 11l.8-1M4 11l.8-1M6 11l.8-1" stroke-width=".8"/></g></svg>
<div class="t" style="top:499.50px;font-size:9.8px;letter-spacing:-0.2px;left:121px;">Leaf Outside</div>
<div class="t" style="top:499.61px;font-size:9.5px;letter-spacing:0.05px;left:265.5px;">Wood - Walnut Horizontal</div>
<svg class="a" style="left:430.5px;top:498.60px" width="12" height="12"><g fill="none" stroke="#333" stroke-width="1.1"><rect x="1" y="1" width="10" height="10" rx="2"/><circle cx="4.5" cy="5" r="2"/><path d="M1.5 9.5c2-2 3-2 4.5-.5s3-2 4.5-1M8 1v2.5M8 3h3" stroke-width=".9"/></g></svg>
<div class="a" style="left:448px;top:498.90px;width:26.5px;height:12.5px;background:#fff;border:1px solid #2a2a2a;border-bottom-width:1.5px"></div>
<div class="a" style="left:476px;top:498.90px;width:18px;height:12.5px;background:#6d5646;border:1px solid #2a2a2a;box-shadow:inset 0 0 0 1px #fff"></div>
<div class="a" style="left:69.5px;top:513.05px;width:442px;height:16.45px;background:#0078d7;border-top:1px solid #ececec"></div>
<svg class="a" style="left:91px;top:514.55px" width="12" height="13"><g fill="none" stroke="#1a1a1a" stroke-width="1"><path d="M5.3 1h1.4v3h-1.4z" fill="#1a1a1a"/><path d="M2.5 4.3h7v1.8h-7z"/><path d="M2.5 6.1v2.6l-1.6 2.8h8.2l1.4-2.8v-2.6"/><path d="M2 11l.8-1M4 11l.8-1M6 11l.8-1" stroke-width=".8"/></g></svg>
<div class="t" style="top:515.95px;font-size:9.8px;letter-spacing:-0.2px;color:#fff;left:121px;">Leaf Inside</div>
<div class="t" style="top:516.06px;font-size:9.5px;letter-spacing:0.05px;color:#fff;left:265.5px;">Wood - Walnut Vertical</div>
<div class="a" style="left:429px;top:513.35px;width:82.5px;height:16.15px;background:#fff;border:1px solid #3a8ee6"></div>
<svg class="a" style="left:430.5px;top:515.05px" width="12" height="12"><g fill="none" stroke="#333" stroke-width="1.1"><rect x="1" y="1" width="10" height="10" rx="2"/><circle cx="4.5" cy="5" r="2"/><path d="M1.5 9.5c2-2 3-2 4.5-.5s3-2 4.5-1M8 1v2.5M8 3h3" stroke-width=".9"/></g></svg>
<div class="a" style="left:448px;top:515.35px;width:26.5px;height:12.5px;background:#fff;border:1px solid #2a2a2a;border-bottom-width:1.5px"></div>
<div class="a" style="left:476px;top:515.35px;width:18px;height:12.5px;background:#573f2e;border:1px solid #2a2a2a;box-shadow:inset 0 0 0 1px #fff"></div>
<div class="btn" style="left:496px;top:515.35px;width:13px;height:13px"></div>
<div class="a" style="left:501px;top:518.55px;border-left:4px solid #222;border-top:3.5px solid transparent;border-bottom:3.5px solid transparent"></div>
<div class="a" style="left:69.5px;top:529.50px;width:442px;height:16.45px;background:#f0f0f0"></div>
<div class="a" style="left:75px;top:535.80px;border-top:4px solid #333;border-left:3.5px solid transparent;border-right:3.5px solid transparent"></div>
<div class="t" style="top:532.51px;font-size:9.2px;letter-spacing:-0.35px;font-weight:bold;left:119.4px;">FRAME AND LEAF 3D PENS</div>
<div class="a" style="left:69.5px;top:545.95px;width:442px;height:16.45px;background:#fff;border-top:1px solid #ececec"></div>
<svg class="a" style="left:104px;top:547.45px" width="11" height="13"><g fill="none" stroke="#333" stroke-width="1.1"><path d="M3.5 1v7.5l2.5 2 2.5-2v-7.5"/><path d="M0.5 11.5h4l2-1"/></g></svg>
<div class="t" style="top:548.85px;font-size:9.8px;letter-spacing:-0.2px;left:121px;">Frame Pen</div>
<div class="t" style="top:548.96px;font-size:9.5px;letter-spacing:-0.2px;left:265.5px;">0.18 mm</div>
<div class="t" style="top:548.96px;font-size:9.5px;letter-spacing:-0.3px;left:412.7px;">3</div>
<div class="a" style="left:455.5px;top:548.25px;width:37.5px;height:12.5px;background:#fff;border:1px solid #2a2a2a;border-radius:1.5px"></div>
<div class="a" style="left:461px;top:550.95px;width:2px;height:7px;background:#ff6000"></div>
<div class="a" style="left:468px;top:550.95px;width:23px;height:7px;background:#ff6000"></div>
<div class="a" style="left:69.5px;top:562.40px;width:442px;height:16.45px;background:#fff;border-top:1px solid #ececec"></div>
<svg class="a" style="left:104px;top:563.90px" width="11" height="13"><g fill="none" stroke="#333" stroke-width="1.1"><path d="M3.5 1v7.5l2.5 2 2.5-2v-7.5"/><path d="M0.5 11.5h4l2-1"/></g></svg>
<div class="t" style="top:565.30px;font-size:9.8px;letter-spacing:-0.2px;left:121px;">Leaf Pen</div>
<div class="t" style="top:565.41px;font-size:9.5px;letter-spacing:-0.2px;left:265.5px;">0.18 mm</div>
<div class="t" style="top:565.41px;font-size:9.5px;letter-spacing:-0.3px;left:412.7px;">3</div>
<div class="a" style="left:455.5px;top:564.70px;width:37.5px;height:12.5px;background:#fff;border:1px solid #2a2a2a;border-radius:1.5px"></div>
<div class="a" style="left:461px;top:567.40px;width:2px;height:7px;background:#ff6000"></div>
<div class="a" style="left:468px;top:567.40px;width:23px;height:7px;background:#ff6000"></div>
<div class="hdr" style="top:589.3px">
<div class="a" style="left:6.5px;top:4.5px;border-left:4px solid #333;border-top:4px solid transparent;border-bottom:4px solid transparent"></div>
<svg class="a" style="left:17px;top:2px" width="18" height="14"><g fill="none" stroke="#333" stroke-width="1.1"><path d="M1 4.5h2.5l-1.5 3 1.5 3h-2.5M3.5 4.5h4v-2h2.5v2h6M3.5 10.5h12.5M8 4.5v6M12 4.5v6M12 7.5h4"/></g></svg>
</div>
<div class="t" style="top:592.71px;font-size:9.2px;letter-spacing:-0.35px;font-weight:bold;color:#111;left:107.6px;">FLOOR PLAN AND SECTION</div>
<div class="hdr" style="top:611.5px">
<div class="a" style="left:6.5px;top:4.5px;border-left:4px solid #333;border-top:4px solid transparent;border-bottom:4px solid transparent"></div>
<svg class="a" style="left:17px;top:1px" width="18" height="15"><g fill="none" stroke="#333" stroke-width="1.1"><circle cx="8" cy="2.5" r="1.3"/><path d="M8 4v9.5M6.5 12l1.5 1.5 1.5-1.5"/><path d="M1 10.5c0-1.5 2.5-1.5 2.5 0v1.5M1 11.5h2.5M3.5 9l2-2M11 8v4M13 10c2-2 3 0 3 1s-2 1-3 0"/></g></svg>
</div>
<div class="t" style="top:614.91px;font-size:9.2px;letter-spacing:-0.35px;font-weight:bold;color:#111;left:107.6px;">DIMENSION MARKER</div>
<div class="hdr" style="top:633.7px">
<div class="a" style="left:6.5px;top:4.5px;border-left:4px solid #a5a5a5;border-top:4px solid transparent;border-bottom:4px solid transparent"></div>
<svg class="a" style="left:17px;top:1px" width="18" height="15"><g fill="none" stroke="#b0b0b0" stroke-width="1.1"><path d="M2 5v9M1 5h2M1 14h2"/><path d="M4 14l3.5-9 3.5 9M5.5 10.5h4"/><path d="M11 3v5l2 3 2-3v-5M11 5h4"/></g></svg>
</div>
<div class="t" style="top:637.11px;font-size:9.2px;letter-spacing:-0.35px;font-weight:bold;color:#9b9b9b;left:107.6px;">MARKER TEXT STYLE</div>
<div class="hdr" style="top:656px">
<div class="a" style="left:6.5px;top:4.5px;border-left:4px solid #a5a5a5;border-top:4px solid transparent;border-bottom:4px solid transparent"></div>
<svg class="a" style="left:17px;top:1px" width="18" height="15"><g fill="none" stroke="#b0b0b0" stroke-width="1.1"><path d="M1.5 1.5h8v8h-8zM2.5 2.5l6 6M8.5 2.5l-6 6"/><path d="M12 1v1M12 4v1M1.5 12.5h1M4.5 12.5h1"/><path d="M8.5 8.5h8v6h-8zM10 11.5h5" fill="#f0f0f0"/></g></svg>
</div>
<div class="t" style="top:659.41px;font-size:9.2px;letter-spacing:-0.35px;font-weight:bold;color:#9b9b9b;left:107.6px;">MARKER CUSTOM SETTINGS</div>
<div class="hdr" style="top:678.2px">
<div class="a" style="left:6.5px;top:4.5px;border-left:4px solid #333;border-top:4px solid transparent;border-bottom:4px solid transparent"></div>
<svg class="a" style="left:20px;top:2px" width="14" height="14"><g fill="none" stroke="#333" stroke-width="1.1"><rect x="2" y="0.8" width="9.5" height="12.5" rx="1.5"/><path d="M4 4h4M4 6.5h5.5M4 9h5.5M4 11h5.5" stroke-width="1"/></g></svg>
</div>
<div class="t" style="top:681.61px;font-size:9.2px;letter-spacing:-0.35px;font-weight:bold;color:#111;left:107.6px;">CLASSIFICATION AND PROPERTIES</div>
<div class="a" style="left:70px;top:706px;width:455px;height:1px;background:#9a9a9a"></div>
<div class="btn" style="left:370px;top:717.5px;width:71.5px;height:16.5px;border-color:#cdcdcd"></div>
<div class="t" style="top:719.80px;font-size:9.8px;letter-spacing:-0.3px;left:0px;left:370px;width:71.5px;text-align:center;">Cancel</div>
<div class="btn" style="left:452.3px;top:717.5px;width:72.2px;height:16.5px;border:1.5px solid #2b7bd0;border-radius:4px"></div>
<div class="t" style="top:719.80px;font-size:9.8px;letter-spacing:-0.3px;left:0px;left:452.3px;width:72.2px;text-align:center;">OK</div>
<svg class="a" style="left:528px;top:733px" width="9" height="9"><g fill="#9a9a9a"><rect x="6" y="1" width="1" height="1"/><rect x="4" y="3" width="1" height="1"/><rect x="6" y="3" width="1" height="1"/><rect x="2" y="5" width="1" height="1"/><rect x="4" y="5" width="1" height="1"/><rect x="6" y="5" width="1" height="1"/></g></svg>
<div class="a" style="left:0;top:742.5px;width:600px;height:10.5px;background:linear-gradient(90deg,#c4c4c4 0,#c4c4c4 36px,#c2c9ca 36px,#c9cfd0 510px,#d0d5d7 540px,rgba(229,233,235,0) 600px)"></div>
<div class="a" style="left:14px;top:744.5px;border-top:3px solid #555;border-left:2px solid transparent;border-right:2px solid transparent"></div>
</body></html>
